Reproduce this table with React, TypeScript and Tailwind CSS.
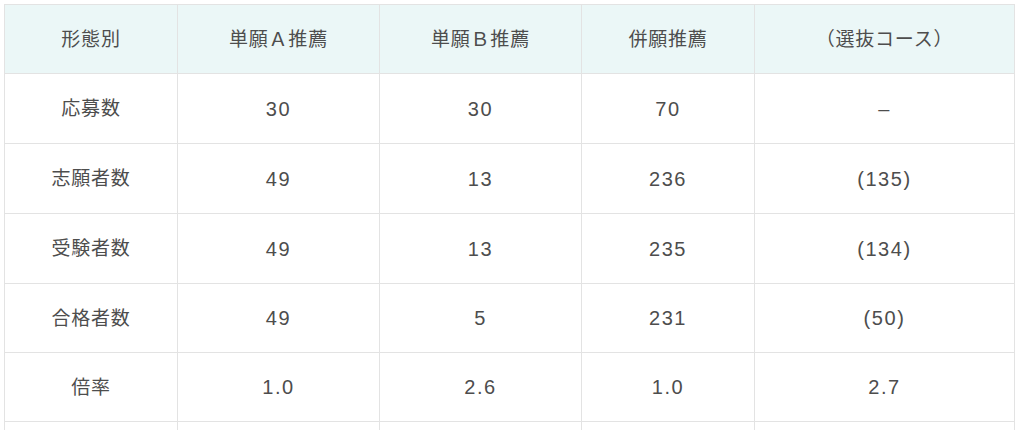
import React from 'react';

const HEAD = ['形態別', '単願Ａ推薦', '単願Ｂ推薦', '併願推薦', '（選抜コース）'];

const ROWS: string[][] = [
  ['応募数', '30', '30', '70', '–'],
  ['志願者数', '49', '13', '236', '(135)'],
  ['受験者数', '49', '13', '235', '(134)'],
  ['合格者数', '49', '5', '231', '(50)'],
  ['倍率', '1.0', '2.6', '1.0', '2.7'],
  ['', '', '', '', ''],
];

// row heights tuned so the lines land on the reference grid
const ROW_H = ['h-[70px]', 'h-[70px]', 'h-[70px]', 'h-[69px]', 'h-[69px]', 'h-[69px]'];

const WIDTHS = ['w-[173px]', 'w-[202px]', 'w-[202px]', 'w-[173px]', 'w-[260px]'];

export default function App() {
  return (
    <div
      className="w-[1024px] h-[430px] overflow-hidden bg-white pt-1 pl-1 text-[#4d4d4d]"
      style={{ fontFamily: '"Noto Sans", "Noto Sans CJK JP", sans-serif' }}
    >
      <table className="border-collapse table-fixed w-[1011px] text-[19px] tracking-[0.04em]">
        <thead>
          <tr className="h-[69px] bg-[#ebf7f7]">
            {HEAD.map((h, i) => (
              <th key={i} className={`${WIDTHS[i]} border border-[#e3e3e3] font-normal text-center`}>
                {h}
              </th>
            ))}
          </tr>
        </thead>
        <tbody>
          {ROWS.map((row, r) => (
            <tr key={r} className={ROW_H[r]}>
              {row.map((c, i) =>
                i === 0 ? (
                  <td key={i} className="border border-[#e3e3e3] text-center">
                    {c}
                  </td>
                ) : (
                  <td
                    key={i}
                    className="border border-[#e3e3e3] text-center text-[20px] tracking-[0.08em] font-['Liberation_Sans',sans-serif]"
                  >
                    {c}
                  </td>
                )
              )}
            </tr>
          ))}
        </tbody>
      </table>
    </div>
  );
}
